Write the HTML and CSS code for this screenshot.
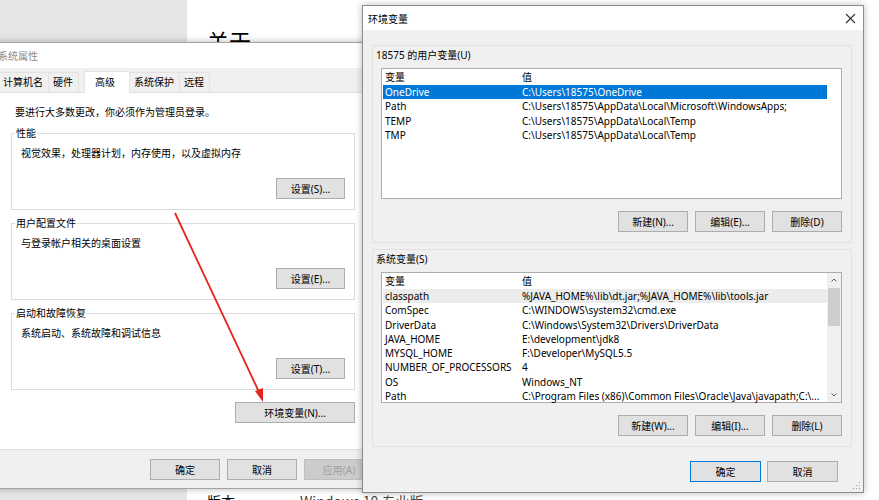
FILE: index.html
```html
<!DOCTYPE html>
<html lang="zh-CN">
<head>
<meta charset="utf-8">
<title>环境变量</title>
<link rel="stylesheet" href="styles.css">
</head>
<body>
<div class="desktop">
    <aside class="nav"></aside>
    <main class="about">
        <h1>关于</h1>
        <div class="spec"><span class="spec-key">版本</span><span>Windows 10 专业版</span></div>
    </main>

    <!-- 系统属性 -->
    <section class="win sysprops">
        <div class="titlebar inactive">系统属性</div>
        <div class="tabs">
            <span class="tab">计算机名</span>
            <span class="tab">硬件</span>
            <span class="tab active">高级</span>
            <span class="tab">系统保护</span>
            <span class="tab">远程</span>
        </div>
        <div class="panel">
            <p class="note">要进行大多数更改，你必须作为管理员登录。</p>
            <fieldset class="group">
                <legend>性能</legend>
                <p class="desc">视觉效果，处理器计划，内存使用，以及虚拟内存</p>
                <div class="actions"><button class="btn">设置(S)...</button></div>
            </fieldset>
            <fieldset class="group">
                <legend>用户配置文件</legend>
                <p class="desc">与登录帐户相关的桌面设置</p>
                <div class="actions"><button class="btn">设置(E)...</button></div>
            </fieldset>
            <fieldset class="group">
                <legend>启动和故障恢复</legend>
                <p class="desc">系统启动、系统故障和调试信息</p>
                <div class="actions"><button class="btn">设置(T)...</button></div>
            </fieldset>
            <div class="actions env-open"><button class="btn wide">环境变量(N)...</button></div>
        </div>
        <div class="footer">
            <button class="btn">确定</button>
            <button class="btn">取消</button>
            <button class="btn disabled">应用(A)</button>
        </div>
    </section>

    <!-- 环境变量 -->
    <section class="win envvars">
        <div class="titlebar">
            <span>环境变量</span>
            <svg class="close" width="11" height="11" viewBox="0 0 11 11"><path d="M1 1L10 10M10 1L1 10" stroke="#333" stroke-width="1.1" fill="none"/></svg>
        </div>
        <div class="env-body">
            <div class="vgroup">
                <div class="vlabel">18575 的用户变量(U)</div>
                <div class="list">
                    <div class="rows">
                        <div class="row head"><span class="name">变量</span><span>值</span></div>
                        <div class="row selected"><span class="name">OneDrive</span><span>C:\Users\18575\OneDrive</span></div>
                        <div class="row"><span class="name">Path</span><span>C:\Users\18575\AppData\Local\Microsoft\WindowsApps;</span></div>
                        <div class="row"><span class="name">TEMP</span><span>C:\Users\18575\AppData\Local\Temp</span></div>
                        <div class="row"><span class="name">TMP</span><span>C:\Users\18575\AppData\Local\Temp</span></div>
                    </div>
                    <div class="scroll-space"></div>
                </div>
                <div class="actions">
                    <button class="btn">新建(N)...</button>
                    <button class="btn">编辑(E)...</button>
                    <button class="btn">删除(D)</button>
                </div>
            </div>

            <div class="vgroup">
                <div class="vlabel">系统变量(S)</div>
                <div class="list">
                    <div class="rows">
                        <div class="row head"><span class="name">变量</span><span>值</span></div>
                        <div class="row hover"><span class="name">classpath</span><span>%JAVA_HOME%\lib\dt.jar;%JAVA_HOME%\lib\tools.jar</span></div>
                        <div class="row"><span class="name">ComSpec</span><span>C:\WINDOWS\system32\cmd.exe</span></div>
                        <div class="row"><span class="name">DriverData</span><span>C:\Windows\System32\Drivers\DriverData</span></div>
                        <div class="row"><span class="name">JAVA_HOME</span><span>E:\development\jdk8</span></div>
                        <div class="row"><span class="name">MYSQL_HOME</span><span>F:\Developer\MySQL5.5</span></div>
                        <div class="row"><span class="name">NUMBER_OF_PROCESSORS</span><span>4</span></div>
                        <div class="row"><span class="name">OS</span><span>Windows_NT</span></div>
                        <div class="row"><span class="name">Path</span><span>C:\Program Files (x86)\Common Files\Oracle\Java\javapath;C:\...</span></div>
                    </div>
                    <div class="scrollbar">
                        <svg class="arrow-btn" width="14" height="15" viewBox="0 0 14 15"><path d="M4.5 8.5L7 6L9.5 8.5" stroke="#606060" fill="none"/></svg>
                        <div class="thumb"></div>
                        <div class="track"></div>
                        <svg class="arrow-btn" width="14" height="15" viewBox="0 0 14 15"><path d="M4.5 6.5L7 9L9.5 6.5" stroke="#606060" fill="none"/></svg>
                    </div>
                </div>
                <div class="actions">
                    <button class="btn">新建(W)...</button>
                    <button class="btn">编辑(I)...</button>
                    <button class="btn">删除(L)</button>
                </div>
            </div>

            <div class="actions dialog-btns">
                <button class="btn default">确定</button>
                <button class="btn">取消</button>
            </div>
        </div>
        <svg class="grip" width="8" height="8" viewBox="0 0 8 8">
            <rect x="6" y="0" width="1" height="1" fill="#a0a0a0"/>
            <rect x="3" y="3" width="1" height="1" fill="#a0a0a0"/>
            <rect x="6" y="3" width="1" height="1" fill="#a0a0a0"/>
            <rect x="0" y="6" width="1" height="1" fill="#a0a0a0"/>
            <rect x="3" y="6" width="1" height="1" fill="#a0a0a0"/>
            <rect x="6" y="6" width="1" height="1" fill="#a0a0a0"/>
        </svg>
    </section>

    <!-- 红色标注箭头 -->
    <svg class="pointer" width="879" height="500" viewBox="0 0 879 500">
        <line x1="175" y1="213" x2="259" y2="392" stroke="#e3261c" stroke-width="1.8"/>
        <polygon points="263,402 255,391 263,388" fill="#e3261c"/>
    </svg>
</div>
</body>
</html>
```

FILE: styles.css
```css
* {
    box-sizing: border-box;
}

body {
    margin: 0;
    font-family: "Noto Sans", "Noto Sans CJK SC", sans-serif;
    font-size: 10px;
    color: #000000;
    background-color: #ffffff;
}

.desktop {
    position: relative;
    width: 879px;
    height: 500px;
    overflow: hidden;
    display: flex;
}

/* background: settings "about" page */
.nav {
    width: 187px;
    background-color: #e6e6e6;
}

.about {
    flex: 1;
    display: flex;
    flex-direction: column;
    padding: 25px 0 0 20px;
}

.about h1 {
    margin: 0;
    font-family: "Noto Sans CJK SC", sans-serif;
    font-size: 22px;
    font-weight: 400;
    line-height: 30px;
}

.spec {
    margin-top: auto;
    margin-bottom: -12px;
    display: flex;
    font-family: "Noto Sans CJK SC", sans-serif;
    font-size: 14px;
    line-height: 22px;
    color: #444444;
}

.spec-key {
    width: 93px;
    color: #000000;
}

/* windows */
.win {
    position: absolute;
    display: flex;
    flex-direction: column;
    background-color: #f0f0f0;
    border: 1px solid #a3a3a3;
    box-shadow: 0 0 7px rgba(0, 0, 0, 0.28);
}

.titlebar {
    display: flex;
    align-items: center;
    justify-content: space-between;
    background-color: #ffffff;
    padding: 0 8px 0 5px;
}

.titlebar.inactive {
    color: #8a8a8a;
}

.btn {
    height: 21px;
    width: 70px;
    padding: 0;
    font-family: inherit;
    font-size: 10px;
    color: #000000;
    background-color: #e1e1e1;
    border: 1px solid #adadad;
}

.btn.disabled {
    color: #a0a0a0;
    background-color: #cccccc;
    border-color: #bfbfbf;
}

.btn.default {
    border-color: #0078d7;
}

.actions {
    display: flex;
    justify-content: flex-end;
}

/* 系统属性 */
.sysprops {
    left: -8px;
    top: 42px;
    width: 390px;
    height: 447px;
}

.sysprops .titlebar {
    height: 25px;
}

.tabs {
    height: 24px;
    display: flex;
    align-items: flex-end;
    margin-left: 6px;
}

.tab {
    height: 20px;
    line-height: 19px;
    padding: 0 5px 0 4px;
    border: 1px solid #e3e3e3;
    border-bottom: none;
    margin-left: -1px;
    background-color: #f0f0f0;
}

.tab.active {
    height: 22px;
    line-height: 21px;
    margin-left: 5px;
    padding: 0 14px 0 10px;
    background-color: #ffffff;
    border-color: #e3e3e3;
    position: relative;
    z-index: 1;
    margin-bottom: -1px;
}

.panel {
    height: 358px;
    margin: 0 13px 0 6px;
    padding: 12px 12px 0 11px;
    background-color: #ffffff;
    border: 1px solid #e0e0e0;
}

.note {
    margin: 0 0 7px 4px;
    line-height: 14px;
}

.group {
    margin: 0 0 6px;
    padding: 0 9px 10px 3px;
    border: 1px solid #dcdcdc;
}

.group legend {
    padding: 0 1px;
    line-height: 14px;
}

.desc {
    margin: 6px 0 18px 6px;
    line-height: 14px;
}

.group .btn {
    width: 69px;
}

.env-open {
    margin-top: 12px;
}

.btn.wide {
    width: 120px;
}

.footer {
    flex: 1;
    display: flex;
    justify-content: flex-end;
    gap: 7px;
    padding: 9px 7px 0 0;
}

/* 环境变量 */
.envvars {
    left: 362px;
    top: 5px;
    width: 502px;
    height: 488px;
    z-index: 2;
    border-color: #8c8c8c;
}

.envvars .titlebar {
    height: 24px;
    padding: 0 7px 0 5px;
}

.close {
    display: block;
}

.env-body {
    padding: 15px 11px 0 9px;
}

.vgroup {
    border: 1px solid #e2e2e2;
    padding: 2px 9px 10px 3px;
    margin-bottom: 6px;
}

.vlabel {
    line-height: 14px;
    margin-bottom: 6px;
}

.list {
    height: 131px;
    margin-left: 5px;
    display: flex;
    background-color: #ffffff;
    border: 1px solid #adadad;
}

.rows {
    flex: 1;
    padding: 1px 0 0 1px;
}

.row {
    display: flex;
    height: 14.3px;
    line-height: 14px;
    padding-left: 2px;
    white-space: nowrap;
}

.row.head {
    height: 15px;
}

.row.selected {
    background-color: #0078d7;
    color: #ffffff;
}

.row.hover {
    background-color: #ececec;
}

.name {
    width: 137px;
}

.scroll-space {
    width: 14px;
}

.scrollbar {
    width: 14px;
    display: flex;
    flex-direction: column;
    background-color: #f0f0f0;
}

.arrow-btn {
    display: block;
}

.thumb {
    height: 38px;
    margin: 0 1px;
    background-color: #cdcdcd;
}

.track {
    flex: 1;
}

.vgroup .actions {
    margin-top: 12px;
    gap: 7px;
}

.dialog-btns {
    margin-top: 14px;
    padding-right: 14px;
    gap: 6px;
}

.dialog-btns .btn {
    width: 71px;
}

.grip {
    position: absolute;
    right: 2px;
    bottom: 2px;
}

.pointer {
    position: absolute;
    left: 0;
    top: 0;
    z-index: 3;
    pointer-events: none;
}
```
